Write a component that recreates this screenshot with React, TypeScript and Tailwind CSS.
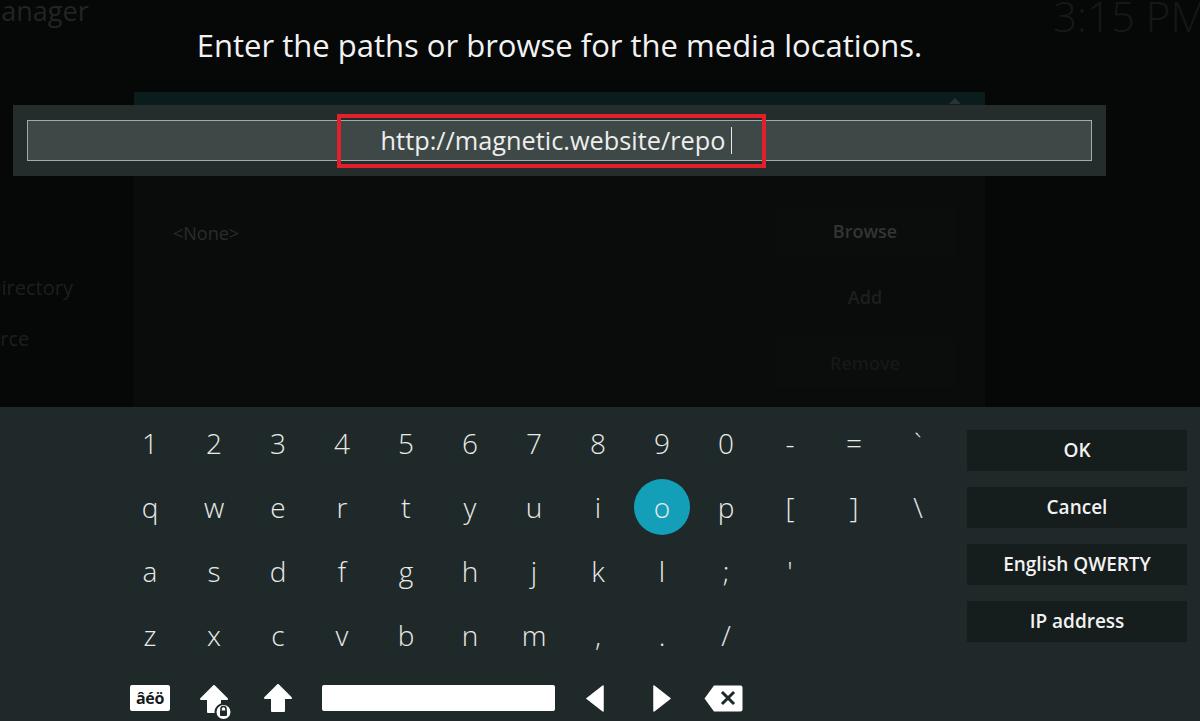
import React from 'react';

const rows: string[][] = [
  ['1', '2', '3', '4', '5', '6', '7', '8', '9', '0', '-', '=', '`'],
  ['q', 'w', 'e', 'r', 't', 'y', 'u', 'i', 'o', 'p', '[', ']', '\\'],
  ['a', 's', 'd', 'f', 'g', 'h', 'j', 'k', 'l', ';', "'"],
  ['z', 'x', 'c', 'v', 'b', 'n', 'm', ',', '.', '/'],
];

const actions = ['OK', 'Cancel', 'English QWERTY', 'IP address'];

const ShiftIcon: React.FC = () => (
  <svg width="28" height="28" viewBox="0 0 28 28">
    <path d="M14 1 L27 14 H20 V27 H8 V14 H1 Z" fill="#fff" stroke="#fff" strokeWidth="2" strokeLinejoin="round" />
  </svg>
);

const CapsIcon: React.FC = () => (
  <svg width="40" height="36" viewBox="0 0 40 36">
    <path d="M20 1 L33 14 H26 V27 H14 V14 H7 Z" fill="#fff" stroke="#fff" strokeWidth="2" strokeLinejoin="round" />
    <circle cx="29.5" cy="27" r="8" fill="#fff" stroke="#202929" strokeWidth="2" />
    <path d="M27 26 v-2 a2.5 2.5 0 0 1 5 0 v2" fill="none" stroke="#202929" strokeWidth="1.6" />
    <rect x="26" y="25.5" width="7" height="5.5" rx="1" fill="#202929" />
  </svg>
);

const ArrowLeft: React.FC = () => (
  <svg width="18" height="27" viewBox="0 0 18 27">
    <path d="M17 1 V26 L1 13.5 Z" fill="#fff" stroke="#fff" strokeWidth="1.5" strokeLinejoin="round" />
  </svg>
);

const ArrowRight: React.FC = () => (
  <svg width="18" height="27" viewBox="0 0 18 27">
    <path d="M1 1 V26 L17 13.5 Z" fill="#fff" stroke="#fff" strokeWidth="1.5" strokeLinejoin="round" />
  </svg>
);

const Backspace: React.FC = () => (
  <svg width="39" height="27" viewBox="0 0 39 27">
    <path d="M10 0.5 H36.5 a2 2 0 0 1 2 2 V24.5 a2 2 0 0 1 -2 2 H10 L0.5 13.5 Z" fill="#fff" />
    <path d="M19 8 L29 18 M29 8 L19 18" stroke="#202929" strokeWidth="3" strokeLinecap="square" />
  </svg>
);

export default function App() {
  return (
    <div
      className="w-[1200px] h-[721px] overflow-hidden bg-[#060707] flex flex-col text-white"
      style={{ fontFamily: '"Open Sans", "Noto Sans", sans-serif' }}
    >
      {/* dimmed window behind the keyboard */}
      <div className="relative h-[407px] flex shrink-0">
        <aside className="w-[134px] shrink-0 flex flex-col overflow-hidden">
          <span className="-ml-[23px] -mt-[4px] text-[27px] leading-[30px] text-[#222424] whitespace-nowrap">Manager</span>
          <span className="mt-[248px] -ml-[13px] text-[20px] leading-[28px] text-[#1d1f1f] whitespace-nowrap">Directory</span>
          <span className="mt-[23px] -ml-[35px] text-[20px] leading-[28px] text-[#1d1f1f] whitespace-nowrap">Source</span>
        </aside>

        <section className="mt-[92px] w-[851px] shrink-0 flex flex-col bg-[#0a0b0b]">
          <div className="relative h-[13px] bg-[#0b1c1c]">
            <span className="absolute right-[24px] top-[6px] w-0 h-0 border-l-[6px] border-r-[6px] border-b-[6px] border-l-transparent border-r-transparent border-b-[#2a3232]" />
          </div>
          <div className="flex flex-1 pt-[100px] pl-[31px] pr-[30px] gap-[30px]">
            <div className="flex-1 flex flex-col">
              <span className="text-[18px] text-[#2a2c2c] mt-[15px] pl-[8px]">&lt;None&gt;</span>
            </div>
            <div className="w-[180px] flex flex-col mt-[1px]">
              <div className="h-[50px] flex items-center justify-center text-[18px] font-semibold text-[#333535] bg-[#0b0c0c]">Browse</div>
              <div className="h-[50px] mt-[16px] flex items-center justify-center text-[18px] font-semibold text-[#1d1f1f]">Add</div>
              <div className="h-[50px] mt-[16px] flex items-center justify-center text-[18px] font-semibold text-[#161818] bg-[#0b0c0c]">Remove</div>
            </div>
          </div>
        </section>

        <div className="flex-1 overflow-hidden">
          <span className="block ml-[68px] -mt-[10px] text-[42px] font-light leading-[52px] text-[#161818] whitespace-nowrap">3:15 PM</span>
        </div>

        {/* keyboard dialog heading + input */}
        <div className="absolute left-[13px] top-0 w-[1093px] flex flex-col">
          <h1 className="h-[92px] flex items-center justify-center text-[31px] text-[#f2f2f2] pb-[2px]">
            Enter the paths or browse for the media locations.
          </h1>
          <div className="relative mt-[13px] h-[71px] bg-[#252d2c] px-[14px] pt-[15px]">
            <div className="h-[41px] border border-[#a3abaa] bg-[#3e4846] flex items-center justify-center pr-[6px]">
              <span className="text-[25.3px] text-[#eeeeee] leading-none">http://magnetic.website/repo</span>
              <span className="ml-[6px] w-[1px] h-[27px] bg-[#e8e8e8]" />
            </div>
            <div className="absolute left-[324px] top-[9px] w-[429px] h-[54px] border-[4px] border-[#e2202b]" />
          </div>
        </div>
      </div>

      {/* keyboard */}
      <div className="flex-1 bg-[#202929] flex pl-[118px] overflow-hidden">
        <div className="w-[832px] pt-[4px] flex flex-col">
          {rows.map((row, ri) => (
            <div key={ri} className="flex h-[64px]">
              {row.map(k => (
                <div key={k} className="w-[64px] h-[64px] flex items-center justify-center text-[28px] font-light text-[#e9e9e9]">
                  {k === 'o' ? (
                    <span className="w-[56px] h-[56px] rounded-full bg-[#139fb8] flex items-center justify-center">o</span>
                  ) : (
                    k
                  )}
                </div>
              ))}
            </div>
          ))}
          <div className="flex h-[60px] items-start pt-[18px]">
            <div className="w-[64px] flex justify-center">
              <span className="w-[40px] h-[26px] bg-white rounded-[2px] flex items-center justify-center text-[16px] font-bold text-[#151a1a] tracking-tight leading-none">âéö</span>
            </div>
            <div className="w-[64px] flex justify-center">
              <CapsIcon />
            </div>
            <div className="w-[64px] flex justify-center -mt-[1px]">
              <ShiftIcon />
            </div>
            <div className="w-[256px] flex justify-center">
              <span className="w-[233px] h-[26px] bg-white rounded-[2px]" />
            </div>
            <div className="w-[64px] flex justify-center -ml-[3px] mr-[3px]">
              <ArrowLeft />
            </div>
            <div className="w-[64px] flex justify-center">
              <ArrowRight />
            </div>
            <div className="w-[64px] flex justify-center -ml-[3px]">
              <Backspace />
            </div>
          </div>
        </div>

        <div className="ml-[17px] w-[220px] pt-[23px] flex flex-col gap-[16px]">
          {actions.map(a => (
            <div key={a} className="h-[41px] bg-[#161d1d] flex items-center justify-center text-[19px] font-semibold text-[#f2f2f2]">
              {a}
            </div>
          ))}
        </div>
      </div>
    </div>
  );
}
